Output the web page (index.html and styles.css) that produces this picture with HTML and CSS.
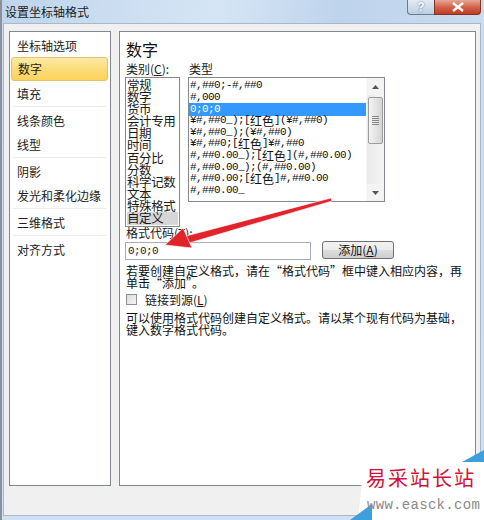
FILE: index.html
```html
<!DOCTYPE html>
<html lang="zh">
<head>
    <meta charset="UTF-8">
    <title>设置坐标轴格式</title>
    <link rel="stylesheet" href="styles.css">
</head>
<body>

    <div class="window">
        <div class="titlebar">
            <span class="title">设置坐标轴格式</span>
            <div class="caption">
                <span class="cap-help">?</span>
                <span class="cap-close">
                    <svg width="14" height="10" viewBox="0 0 14 10"><path d="M2 1 L12 9 M12 1 L2 9" stroke="#fff" stroke-width="2.4" fill="none"/></svg>
                </span>
            </div>
        </div>

        <div class="client">
            <div class="nav">
                <div class="nav-item">坐标轴选项</div>
                <div class="nav-item active">数字</div>
                <div class="nav-item">填充</div>
                <div class="nav-sep"></div>
                <div class="nav-item">线条颜色</div>
                <div class="nav-item">线型</div>
                <div class="nav-sep"></div>
                <div class="nav-item">阴影</div>
                <div class="nav-item">发光和柔化边缘</div>
                <div class="nav-sep"></div>
                <div class="nav-item">三维格式</div>
                <div class="nav-sep"></div>
                <div class="nav-item">对齐方式</div>
            </div>

            <div class="pane">
                <h2 class="pane-title">数字</h2>

                <div class="lists">
                    <div class="col-cat">
                        <div class="label">类别(<u>C</u>):</div>
                        <div class="cat-list">
                            <div class="row">常规</div>
                            <div class="row">数字</div>
                            <div class="row">货币</div>
                            <div class="row">会计专用</div>
                            <div class="row">日期</div>
                            <div class="row">时间</div>
                            <div class="row">百分比</div>
                            <div class="row">分数</div>
                            <div class="row">科学记数</div>
                            <div class="row">文本</div>
                            <div class="row">特殊格式</div>
                            <div class="row sel-grey">自定义</div>
                        </div>
                    </div>
                    <div class="col-type">
                        <div class="label">类型</div>
                        <div class="type-list">
                            <div class="type-rows">
                                <div class="trow">#,##0;-#,##0</div>
                                <div class="trow">#,000</div>
                                <div class="trow selected">0;0;0</div>
                                <div class="trow">¥#,##0_);[<span class="cn">红色</span>](¥#,##0)</div>
                                <div class="trow">¥#,##0_);(¥#,##0)</div>
                                <div class="trow">¥#,##0;[<span class="cn">红色</span>]¥#,##0</div>
                                <div class="trow">#,##0.00_);[<span class="cn">红色</span>](#,##0.00)</div>
                                <div class="trow">#,##0.00_);(#,##0.00)</div>
                                <div class="trow">#,##0.00;[<span class="cn">红色</span>]#,##0.00</div>
                                <div class="trow">#,##0.00_</div>
                            </div>
                            <div class="vscroll">
                                <div class="sb-btn">
                                    <svg width="7" height="4" viewBox="0 0 7 4"><path d="M0 4 L3.5 0 L7 4 Z" fill="#555"/></svg>
                                </div>
                                <div class="sb-track">
                                    <div class="sb-thumb">
                                        <svg width="7" height="9" viewBox="0 0 7 9"><path d="M0 .5 H7 M0 2.5 H7 M0 4.5 H7 M0 6.5 H7 M0 8.5 H7" stroke="#888" stroke-width="1"/></svg>
                                    </div>
                                </div>
                                <div class="sb-btn">
                                    <svg width="7" height="4" viewBox="0 0 7 4"><path d="M0 0 L3.5 4 L7 0 Z" fill="#555"/></svg>
                                </div>
                            </div>
                        </div>
                    </div>
                </div>

                <div class="label code-label">格式代码(<u>T</u>):</div>
                <div class="code-row">
                    <div class="code-input">0;0;0</div>
                    <button class="add-btn">添加(<u>A</u>)</button>
                </div>

                <p class="note">若要创建自定义格式，请在“格式代码”框中键入相应内容，再<br>单击“添加”。</p>

                <label class="check-row">
                    <span class="checkbox"></span>
                    <span>链接到源(<u>L</u>)</span>
                </label>

                <p class="note note-2">可以使用格式代码创建自定义格式。请以某个现有代码为基础，<br>键入数字格式代码。</p>
            </div>
        </div>
    </div>

    <!-- 标注箭头 -->
    <svg class="arrow" width="484" height="520" viewBox="0 0 484 520">
        <polygon points="331,198 332,201 189,243 186,236" fill="#e3232b" stroke="#fff" stroke-width="0.6"/>
        <polygon points="165,245 183,228 192,248" fill="#e3232b" stroke="#fff" stroke-width="0.6"/>
    </svg>

    <!-- 水印 -->
    <div class="watermark">
        <svg class="wm-bg" width="134" height="70" viewBox="0 0 134 70">
            <polygon points="14,12 134,12 134,70 8,70" fill="#fff"/>
            <polygon points="112,12 134,0 134,12" fill="#3da0dc"/>
            <polygon points="0,70 22,54 22,70" fill="#3da0dc"/>
        </svg>
        <div class="wm-name">易采站长站</div>
        <div class="wm-url">www.easck.com</div>
    </div>

</body>
</html>
```

FILE: styles.css
```css
body {
    margin: 0;
    width: 484px;
    height: 520px;
    overflow: hidden;
    position: relative;
    font-family: "Noto Sans CJK SC", sans-serif;
    font-size: 12px;
    color: #1a1a1a;
    background: #c3d8ee;
}
u {
    text-decoration: underline;
}
.window {
    height: 520px;
    display: flex;
    flex-direction: column;
    border-left: 2px solid #8d8f9a;
    box-sizing: border-box;
    background: linear-gradient(#b9d1ea, #c9dcf0 20px, #d0e1f3);
}
.titlebar {
    height: 23px;
    display: flex;
    justify-content: space-between;
    align-items: flex-start;
    background: linear-gradient(100deg, #bfd5ec, #d5e5f5 45%, #bed4ec 70%, #c9dcf0);
}
.title {
    padding: 3px 0 0 3px;
    line-height: 17px;
    font-size: 12px;
    color: #1b1b1b;
}
.caption {
    display: flex;
    margin-right: 3px;
}
.cap-help, .cap-close {
    height: 15px;
    display: flex;
    align-items: center;
    justify-content: center;
    box-sizing: border-box;
    border: 1px solid #6b7b90;
    border-top: none;
}
.cap-help {
    width: 27px;
    border-radius: 0 0 0 4px;
    background: linear-gradient(#e4ecf5, #bccde1);
    color: #fff;
    font-family: "Liberation Sans", sans-serif;
    font-weight: bold;
    font-size: 12px;
    text-shadow: 0 0 2px #44566d;
    border-right: none;
}
.cap-close {
    width: 47px;
    border-radius: 0 0 4px 0;
    border-color: #7d3327;
    background: linear-gradient(#e6a697, #d3644c 50%, #c23a24);
}
.client {
    flex: 1;
    margin: 0 3px 4px 1px;
    background: #f0f0f0;
    border: 1px solid #a7b8cc;
    display: flex;
    align-items: flex-start;
    padding: 7px 4px 0 5px;
}
.nav {
    width: 102px;
    height: 455px;
    box-sizing: border-box;
    border: 1px solid #828790;
    background: #fff;
    padding: 1px 2px 0 1px;
}
.nav-item {
    height: 24px;
    line-height: 25px;
    padding-left: 6px;
    white-space: nowrap;
    color: #222;
}
.nav-item.active {
    box-sizing: border-box;
    border: 1px solid #e3c26a;
    border-radius: 3px;
    background: linear-gradient(#fdeaa6, #fcdb75 55%, #fbd35c);
    line-height: 22px;
}
.nav-sep {
    height: 1px;
    margin: 1px 2px;
    background: #ececec;
}
.pane {
    width: 357px;
    height: 455px;
    margin-left: 8px;
    box-sizing: border-box;
    border: 1px solid #828790;
    background: #fff;
    padding: 7px 0 0 5px;
}
.pane-title {
    margin: 0 0 0 1px;
    font-size: 16px;
    font-weight: normal;
    line-height: 20px;
    color: #111;
}
.label {
    line-height: 14px;
    white-space: nowrap;
}
.lists {
    display: flex;
    gap: 8px;
    margin-top: 3px;
}
.lists .label {
    padding-left: 1px;
    margin-bottom: 1px;
}
.cat-list {
    width: 55px;
    height: 150px;
    box-sizing: border-box;
    border: 1px solid #828790;
    padding: 1px 1px 0 1px;
    overflow: hidden;
}
.row {
    height: 12.1px;
    line-height: 12px;
    font-size: 12.5px;
    white-space: nowrap;
    letter-spacing: -0.4px;
}
.row.sel-grey {
    background: #d6d6d6;
    height: 13px;
}
.type-list {
    width: 197px;
    height: 125px;
    box-sizing: border-box;
    border: 1px solid #828790;
    display: flex;
}
.type-rows {
    flex: 1;
    padding-top: 2px;
    overflow: hidden;
}
.trow {
    height: 11.6px;
    line-height: 11.6px;
    padding-left: 1px;
    font-family: "Liberation Mono", "Noto Sans CJK SC", monospace;
    font-size: 11px;
    letter-spacing: -0.6px;
    white-space: nowrap;
    color: #111;
}
.trow .cn {
    display: inline-block;
    height: 11.6px;
    vertical-align: top;
    font-family: "Noto Sans CJK SC", sans-serif;
    font-size: 12px;
    letter-spacing: 0;
    line-height: 11.6px;
}
.trow.selected {
    background: #3399ff;
    color: #fff;
    height: 13px;
    line-height: 13px;
    margin-bottom: -1px;
}
.vscroll {
    width: 17px;
    display: flex;
    flex-direction: column;
    background: #f3f3f3;
    border-left: 1px solid #f8f8f8;
}
.sb-btn {
    height: 17px;
    display: flex;
    align-items: center;
    justify-content: center;
}
.sb-track {
    flex: 1;
    padding-top: 2px;
    background: linear-gradient(90deg, #e9e9e9, #f5f5f5);
}
.sb-thumb {
    height: 47px;
    margin: 0 1px;
    box-sizing: border-box;
    border: 1px solid #9c9c9c;
    border-radius: 2px;
    background: linear-gradient(90deg, #f3f3f3, #e4e4e4 50%, #d4d4d4);
    display: flex;
    align-items: center;
    justify-content: center;
}
.code-label {
    margin-top: 0;
    line-height: 12px;
    padding-left: 1px;
}
.code-row {
    display: flex;
    align-items: center;
    gap: 11px;
    margin-top: 3px;
}
.code-input {
    width: 186px;
    height: 18px;
    box-sizing: border-box;
    border: 1px solid #a5acb5;
    border-top-color: #abadb3;
    padding-left: 2px;
    line-height: 16px;
    font-family: "Liberation Mono", monospace;
    font-size: 11px;
    letter-spacing: -0.6px;
    background: #fff;
}
.add-btn {
    width: 72px;
    height: 18px;
    margin-top: -2px;
    padding: 0;
    border: 1px solid #707070;
    border-radius: 3px;
    background: linear-gradient(#f2f2f2, #ebebeb 50%, #dddddd 51%, #cfcfcf);
    font-family: "Noto Sans CJK SC", sans-serif;
    font-size: 12px;
    line-height: 16px;
    color: #111;
}
.note {
    margin: 5px 0 0 1px;
    line-height: 11.5px;
    white-space: nowrap;
    color: #111;
}
.note-2 {
    margin-top: 6px;
}
.check-row {
    display: flex;
    align-items: center;
    gap: 8px;
    margin-top: 5px;
    height: 13px;
    line-height: 13px;
    padding-left: 1px;
}
.checkbox {
    width: 11px;
    height: 11px;
    box-sizing: border-box;
    border: 1px solid #8e8f8f;
    background: linear-gradient(135deg, #dcdcdc, #f4f4f4);
}
.arrow {
    position: absolute;
    left: 0;
    top: 0;
    pointer-events: none;
}
.watermark {
    position: absolute;
    left: 350px;
    top: 450px;
    width: 134px;
    height: 70px;
    pointer-events: none;
}
.wm-bg {
    position: absolute;
    left: 0;
    top: 0;
}
.wm-name {
    position: absolute;
    left: 16px;
    top: 15px;
    font-family: "Noto Sans CJK SC", serif;
    font-size: 20px;
    line-height: 26px;
    letter-spacing: 2px;
    color: #cf1339;
    white-space: nowrap;
}
.wm-url {
    position: absolute;
    left: 17px;
    top: 47px;
    font-family: "Liberation Mono", monospace;
    font-size: 14px;
    line-height: 16px;
    letter-spacing: 0.3px;
    color: #8a8a8a;
    white-space: nowrap;
}
```
